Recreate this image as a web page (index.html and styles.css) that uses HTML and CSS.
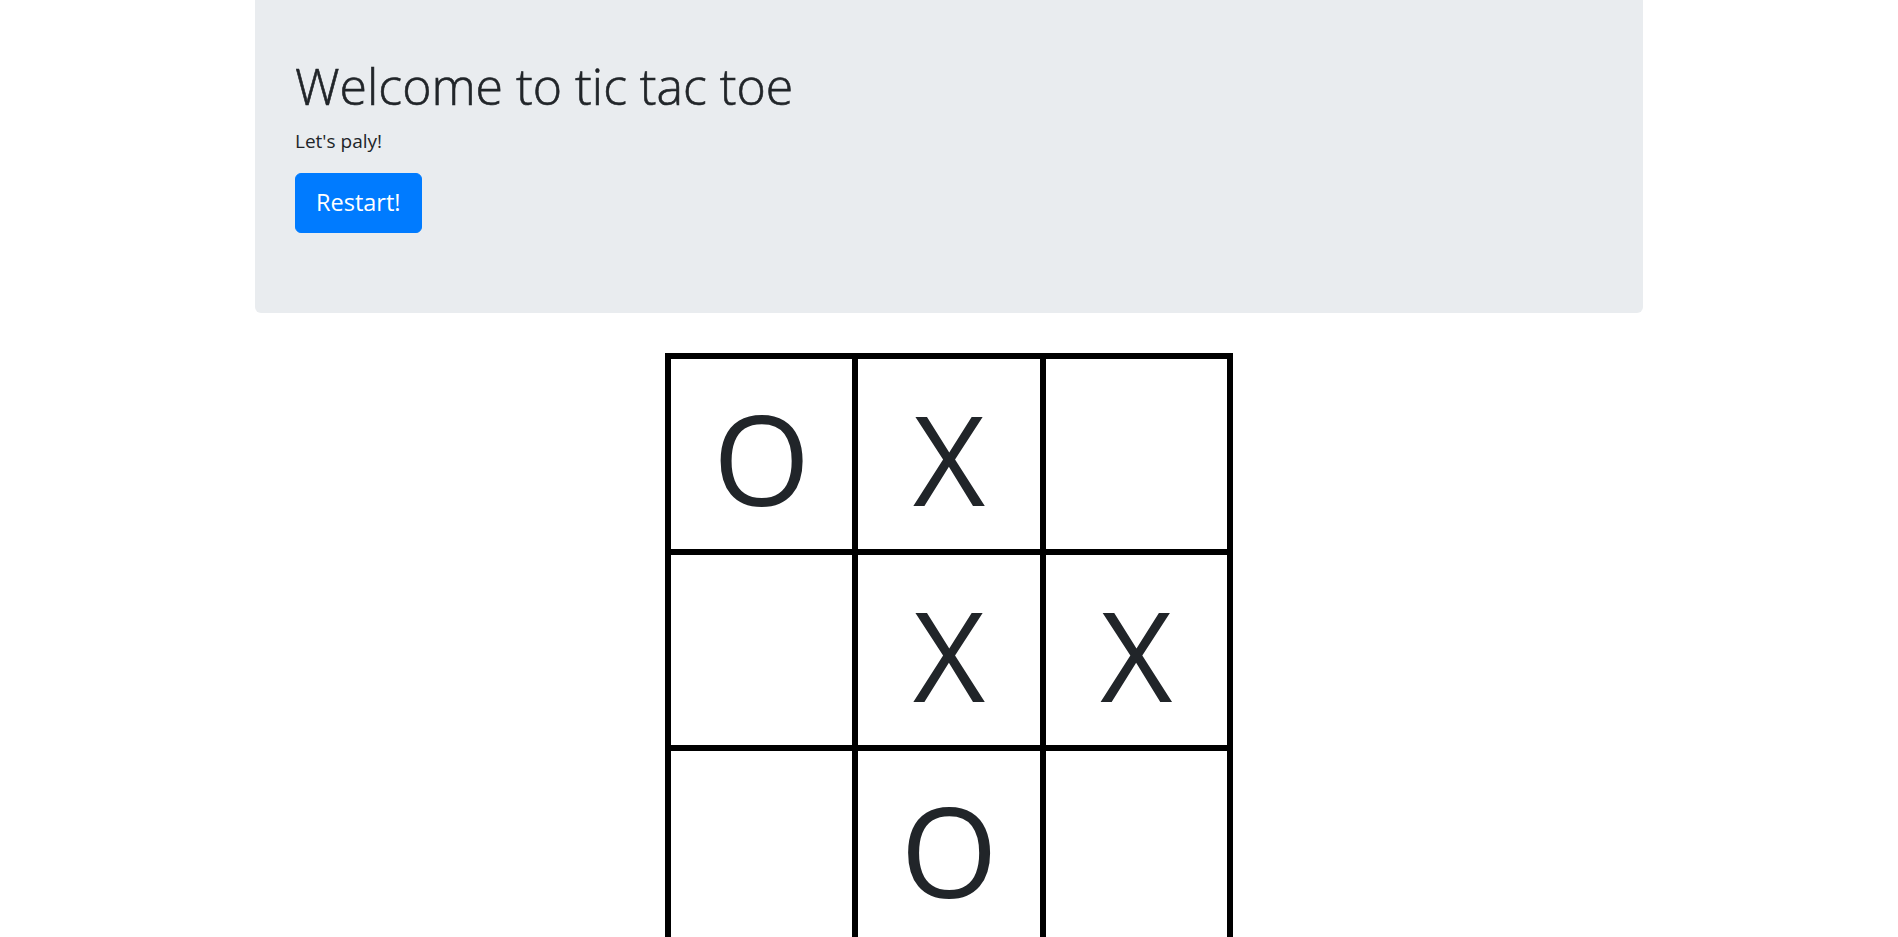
FILE: index.html
```html
<!DOCTYPE html>
<html lang="en">
<head>
<meta charset="utf-8">
<title>Tic tac toe</title>
<link rel="stylesheet" href="styles.css">
</head>
<body>
  <div class="container">
    <div class="jumbotron">
      <h1 class="title">Welcome to tic tac toe</h1>
      <p class="lead-text">Let's paly!</p>
      <button class="btn" type="button">Restart!</button>
    </div>
  </div>
  <div class="board">
    <div class="cell">O</div>
    <div class="cell">X</div>
    <div class="cell"></div>
    <div class="cell"></div>
    <div class="cell">X</div>
    <div class="cell">X</div>
    <div class="cell"></div>
    <div class="cell">O</div>
    <div class="cell"></div>
  </div>
</body>
</html>
```

FILE: styles.css
```css
html, body {
  margin: 0;
  padding: 0;
  background: #fff;
}

body {
  font-family: "Open Sans", "Noto Sans", sans-serif;
  color: #212529;
}

.container {
  width: 1388px;
  margin: 0 auto;
}

.jumbotron {
  background: #e9ecef;
  border-radius: 0 0 6px 6px;
  padding: 56px 40px 80px;
  margin-bottom: 40px;
}

.title {
  margin: 0 0 10px;
  font-size: 50px;
  font-weight: 300;
  line-height: 60px;
  -webkit-text-stroke: 0.6px #212529;
}

.lead-text {
  margin: 0 0 17px;
  font-size: 19px;
  line-height: 30px;
}

.btn {
  display: inline-block;
  font-family: inherit;
  font-size: 23.5px;
  line-height: 37.5px;
  padding: 10px 20px;
  border: 1px solid #007bff;
  background: #007bff;
  color: #fff;
  border-radius: 6px;
  cursor: pointer;
}

.board {
  box-sizing: border-box;
  width: 568px;
  margin: 0 auto;
  display: grid;
  grid-template-columns: repeat(3, 1fr);
  grid-auto-rows: 190px;
  gap: 6px;
  padding: 6px;
  background: #000;
}

.cell {
  background: #fff;
  font-size: 125px;
  line-height: 182px;
  padding-top: 8px;
  text-align: center;
  color: #212529;
}
```
